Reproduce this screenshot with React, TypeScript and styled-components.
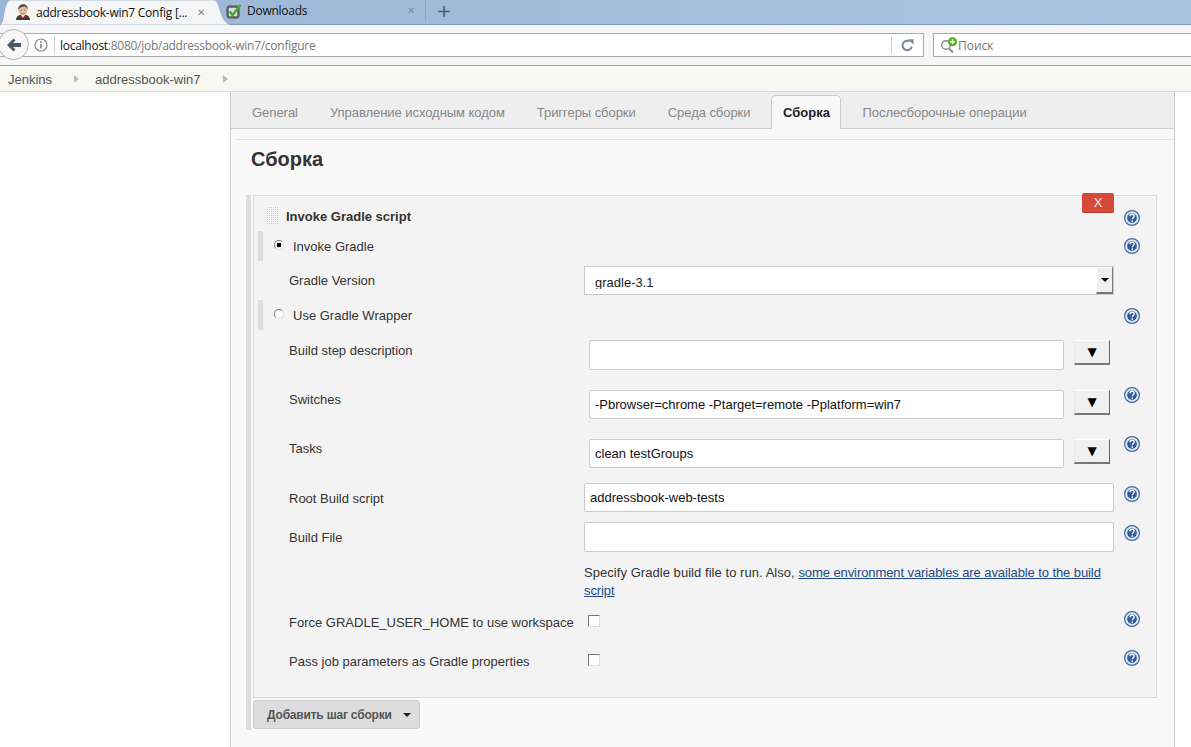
import styled, { createGlobalStyle } from "styled-components";

const GlobalStyle = createGlobalStyle`
    html, body {
        margin: 0;
        padding: 0;
        height: 100%;
        overflow: hidden;
        background: #fff;
    }
    body {
        font-family: "Liberation Sans", Arial, sans-serif;
        font-size: 13px;
        color: #333;
    }
`;

function HelpIcon() {
    return (
        <HelpSvg viewBox="0 0 16 16" aria-label="Help">
            <circle cx="8" cy="8" r="7.4" fill="#dfe7f2" stroke="#3f6aa5" strokeWidth="1.2" />
            <circle cx="8" cy="8" r="5.4" fill="#2f5c9c" stroke="#fff" strokeWidth="0.9" />
            <path
                d="M5.9 6.3c0-1.3 1-2.1 2.2-2.1s2.1.8 2.1 1.9c0 1.6-1.9 1.6-1.9 3.1"
                fill="none"
                stroke="#fff"
                strokeWidth="1.4"
            />
            <rect x="7.5" y="10.4" width="1.5" height="1.5" fill="#fff" />
        </HelpSvg>
    );
}

function JenkinsFavicon() {
    return (
        <Favicon viewBox="0 0 16 16">
            <path d="M1 16c0-3 2-4.500 4-5h6c2 .5 4 2 4 5z" fill="#3d3a3a" />
            <path d="M6 11h4l-2 3z" fill="#fff" />
            <path d="M5 11.500l3 1.300 3-1.300v2l-3-1-3 1z" fill="#c4332d" />
            <ellipse cx="8" cy="6" rx="4.600" ry="5.300" fill="#e8bfa3" />
            <path d="M3.400 6.500C2.800 2.500 5 .2 8 .2s5.200 2 4.600 5.500c-.6-2-1.600-3-3.200-3.200-2 .6-4.800.4-6 4z" fill="#5b4a44" />
            <path d="M5.500 9.200c1.500 1 3.500 1 5 0" stroke="#9a6a55" strokeWidth=".8" fill="none" />
            <circle cx="6.300" cy="6" r=".6" fill="#333" />
            <circle cx="9.800" cy="6" r=".6" fill="#333" />
        </Favicon>
    );
}

function DownloadsFavicon() {
    return (
        <Favicon viewBox="0 0 16 16">
            <rect x="1" y="3" width="12" height="12" rx="2" fill="#77797b" stroke="#444" strokeWidth="1" />
            <rect x="3" y="5" width="8" height="8" fill="#d9dbdc" />
            <path d="M3.500 8.500l3 3.500L14.500 2" fill="none" stroke="#3fae2a" strokeWidth="2.400" />
        </Favicon>
    );
}

function BackArrow() {
    return (
        <svg width="16" height="16" viewBox="0 0 16 16">
            <path d="M1 8l6.500-6.500 2 2L7 6h8v4H7l2.500 2.500-2 2z" fill="#4a5a6c" />
        </svg>
    );
}

function InfoIcon() {
    return (
        <svg width="14" height="14" viewBox="0 0 14 14">
            <circle cx="7" cy="7" r="6" fill="none" stroke="#8a8a8a" strokeWidth="1.200" />
            <rect x="6.200" y="6" width="1.600" height="4.500" fill="#7a7a7a" />
            <rect x="6.200" y="3.300" width="1.600" height="1.600" fill="#7a7a7a" />
        </svg>
    );
}

function ReloadIcon() {
    return (
        <svg width="13" height="13" viewBox="0 0 13 13">
            <path
                d="M10.800 7.500A4.700 4.700 0 1 1 8.500 2.400"
                fill="none"
                stroke="#76889a"
                strokeWidth="2"
            />
            <path d="M7 0.200h5.500v5.500z" fill="#76889a" />
        </svg>
    );
}

function SearchIcon() {
    return (
        <SearchSvg viewBox="0 0 18 17">
            <circle cx="6" cy="8" r="4.300" fill="none" stroke="#8b8b8b" strokeWidth="1.500" />
            <path d="M9 11.500l4 4" stroke="#8b8b8b" strokeWidth="2" />
            <circle cx="12.500" cy="4.700" r="4.500" fill="#4fb31f" />
            <path d="M10 4.700h5M12.500 2.200v5" stroke="#fff" strokeWidth="1.500" />
        </SearchSvg>
    );
}

function ActiveTabShape() {
    return (
        <ActiveShapeSvg viewBox="0 0 232 25" preserveAspectRatio="none">
            <path
                d="M0 25C5 22 3 0 11 0H214C221 0 219 24 232 25Z"
                fill="#f5f5f5"
                stroke="#7f9ab8"
                strokeWidth="0.600"
            />
        </ActiveShapeSvg>
    );
}

function DropButton() {
    return <DropBtn type="button">▼</DropBtn>;
}

export default function App() {
    return (
        <>
            <GlobalStyle />
            <Page>
                <TabStrip>
                    <ActiveTab>
                        <ActiveTabShape />
                        <JenkinsFavicon />
                        <TabTitle>addressbook-win7 Config [...</TabTitle>
                        <TabClose>✕</TabClose>
                    </ActiveTab>
                    <InactiveTab>
                        <DownloadsFavicon />
                        <TabTitle>Downloads</TabTitle>
                        <TabClose>✕</TabClose>
                    </InactiveTab>
                    <NewTab>+</NewTab>
                </TabStrip>
                <Toolbar>
                    <BackButton>
                        <BackArrow />
                    </BackButton>
                    <UrlBar>
                        <InfoIcon />
                        <UrlDivider />
                        <UrlText>
                            <b>localhost</b>:8080/job/addressbook-win7/configure
                        </UrlText>
                        <ReloadBox>
                            <ReloadIcon />
                        </ReloadBox>
                    </UrlBar>
                    <SearchBar>
                        <SearchIcon />
                        <SearchText>Поиск</SearchText>
                    </SearchBar>
                </Toolbar>
                <Breadcrumbs>
                    <Crumb>Jenkins</Crumb>
                    <CrumbArrow />
                    <Crumb>addressbook-win7</Crumb>
                    <CrumbArrow />
                </Breadcrumbs>
                <Body>
                    <Sidebar />
                    <Main>
                        <TabBar>
                            <ConfigTab>General</ConfigTab>
                            <ConfigTab>Управление исходным кодом</ConfigTab>
                            <ConfigTab>Триггеры сборки</ConfigTab>
                            <ConfigTab>Среда сборки</ConfigTab>
                            <ConfigTab $active>Сборка</ConfigTab>
                            <ConfigTab>Послесборочные операции</ConfigTab>
                        </TabBar>
                        <Section>
                            <SectionTitle>Сборка</SectionTitle>
                        </Section>
                        <Block>
                            <StepBox>
                                <DeleteButton type="button">X</DeleteButton>
                                <StepHeader>
                                    <Handle />
                                    <StepTitle>Invoke Gradle script</StepTitle>
                                    <HelpIcon />
                                </StepHeader>
                                <RadioRow>
                                    <RadioLabel>
                                        <Radio type="radio" name="mode" defaultChecked />
                                        Invoke Gradle
                                    </RadioLabel>
                                    <HelpIcon />
                                </RadioRow>
                                <Row $height={39} $pad={5}>
                                    <FieldLabel $pad={7}>Gradle Version</FieldLabel>
                                    <SelectBox>
                                        <SelectValue>gradle-3.1</SelectValue>
                                        <SelectArrow />
                                    </SelectBox>
                                </Row>
                                <RadioRow $helpShift={1}>
                                    <RadioLabel>
                                        <Radio type="radio" name="mode" />
                                        Use Gradle Wrapper
                                    </RadioLabel>
                                    <HelpIcon />
                                </RadioRow>
                                <Row $height={50} $pad={10}>
                                    <FieldLabel $pad={3}>Build step description</FieldLabel>
                                    <ExpandField>
                                        <TextInput defaultValue="" $height={30} />
                                        <DropButton />
                                    </ExpandField>
                                </Row>
                                <Row $height={49} $pad={10} $helpTop={-3}>
                                    <FieldLabel $pad={2}>Switches</FieldLabel>
                                    <ExpandField>
                                        <TextInput defaultValue="-Pbrowser=chrome -Ptarget=remote -Pplatform=win7" />
                                        <DropButton />
                                    </ExpandField>
                                    <HelpIcon />
                                </Row>
                                <Row $height={49} $pad={10} $helpTop={-3}>
                                    <FieldLabel $pad={2}>Tasks</FieldLabel>
                                    <ExpandField>
                                        <TextInput defaultValue="clean testGroups" />
                                        <DropButton />
                                    </ExpandField>
                                    <HelpIcon />
                                </Row>
                                <Row $height={39} $pad={5} $helpTop={3}>
                                    <FieldLabel $pad={8}>Root Build script</FieldLabel>
                                    <TextInput defaultValue="addressbook-web-tests" />
                                    <HelpIcon />
                                </Row>
                                <Row $height={39} $pad={5} $helpTop={3}>
                                    <FieldLabel $pad={8}>Build File</FieldLabel>
                                    <TextInput defaultValue="" $height={30} />
                                    <HelpIcon />
                                </Row>
                                <HintRow>
                                    Specify Gradle build file to run. Also,{" "}
                                    <HintLink href="#">
                                        some environment variables are available to the build script
                                    </HintLink>
                                </HintRow>
                                <CheckRow>
                                    <CheckLabel>Force GRADLE_USER_HOME to use workspace</CheckLabel>
                                    <CheckBox type="checkbox" />
                                    <HelpIcon />
                                </CheckRow>
                                <CheckRow>
                                    <CheckLabel>Pass job parameters as Gradle properties</CheckLabel>
                                    <CheckBox type="checkbox" />
                                    <HelpIcon />
                                </CheckRow>
                            </StepBox>
                            <AddStepButton type="button">
                                Добавить шаг сборки
                                <AddCaret />
                            </AddStepButton>
                        </Block>
                    </Main>
                    <RightGutter />
                </Body>
            </Page>
        </>
    );
}

const Page = styled.div`
    width: 1191px;
    height: 747px;
    overflow: hidden;
    display: flex;
    flex-direction: column;
`;

const TabStrip = styled.div`
    height: 24px;
    flex: none;
    display: flex;
    padding-left: 5px;
    background: linear-gradient(to right, #9ab6d6, #abc5e1);
    border-bottom: 1px solid #7d98b7;
    font-family: "Open Sans", sans-serif;
    font-size: 12px;
    letter-spacing: -0.25px;
    color: #111;
`;

const Favicon = styled.svg`
    width: 16px;
    height: 16px;
    flex: none;
    position: relative;
`;

const ActiveShapeSvg = styled.svg`
    position: absolute;
    left: -5px;
    top: 0;
    width: 232px;
    height: 25px;
`;

const ActiveTab = styled.div`
    position: relative;
    width: 215px;
    display: flex;
    align-items: center;
    padding: 0 5px 0 10px;
    box-sizing: border-box;
    flex: none;
`;

const InactiveTab = styled.div`
    width: 206px;
    box-sizing: border-box;
    display: flex;
    align-items: center;
    padding-left: 6px;
    flex: none;
    border-right: 1px solid #8aa3bf;
    margin: 0 0 3px;
    position: relative;
`;

const TabTitle = styled.span`
    position: relative;
    margin-left: 5px;
    flex: 1;
    white-space: nowrap;
`;

const TabClose = styled.span`
    position: relative;
    width: 18px;
    text-align: left;
    color: #7f8994;
    font-family: "DejaVu Sans", sans-serif;
    font-size: 10px;
    font-weight: bold;
`;

const NewTab = styled.div`
    width: 36px;
    text-align: center;
    font-family: "DejaVu Sans", sans-serif;
    font-size: 18px;
    line-height: 22px;
    color: #4e5a68;
`;

const Toolbar = styled.div`
    height: 41px;
    flex: none;
    box-sizing: border-box;
    display: flex;
    gap: 9px;
    padding-top: 8px;
    position: relative;
    background: #f5f5f5;
    border-bottom: 1px solid #a8a8a8;
`;

const BackButton = styled.div`
    position: absolute;
    left: -2px;
    top: 4px;
    width: 29px;
    height: 29px;
    border: 1px solid #b5b5b5;
    border-radius: 50%;
    background: #f7f7f7;
    display: flex;
    align-items: center;
    justify-content: center;
`;

const UrlBar = styled.div`
    width: 924px;
    height: 24px;
    box-sizing: border-box;
    background: #fff;
    border: 1px solid #ababab;
    border-left: none;
    display: flex;
    align-items: center;
    padding-left: 34px;
    flex: none;
`;

const UrlDivider = styled.span`
    width: 1px;
    height: 17px;
    margin: 0 5px 0 6px;
    background: #ccc;
`;

const UrlText = styled.span`
    flex: 1;
    font-family: "Open Sans", sans-serif;
    font-size: 12px;
    letter-spacing: -0.27px;
    color: #777;
    white-space: nowrap;
    b {
        font-weight: 400;
        color: #111;
    }
`;

const ReloadBox = styled.div`
    width: 31px;
    height: 17px;
    border-left: 1px solid #ccc;
    display: flex;
    align-items: center;
    justify-content: center;
`;

const SearchBar = styled.div`
    flex: 1;
    height: 24px;
    box-sizing: border-box;
    background: #fff;
    border: 1px solid #ababab;
    border-right: none;
    display: flex;
    align-items: center;
    padding-left: 6px;
`;

const SearchSvg = styled.svg`
    width: 18px;
    height: 17px;
    flex: none;
`;

const SearchText = styled.span`
    font-family: "Open Sans", sans-serif;
    font-size: 12px;
    color: #757575;
`;

const Breadcrumbs = styled.div`
    height: 26px;
    flex: none;
    box-sizing: border-box;
    display: flex;
    align-items: center;
    padding: 1px 0 0 8px;
    background: #f6f8f1;
    border-bottom: 1px solid #d8d8d4;
    color: #555;
`;

const Crumb = styled.span`
    white-space: nowrap;
`;

const CrumbArrow = styled.span`
    width: 0;
    height: 0;
    margin: 0 16px 0 22px;
    border-left: 5px solid #b8bab5;
    border-top: 4px solid transparent;
    border-bottom: 4px solid transparent;
`;

const Body = styled.div`
    flex: 1;
    min-height: 0;
    display: flex;
`;

const Sidebar = styled.div`
    width: 230px;
    flex: none;
    background: #fff;
`;

const RightGutter = styled.div`
    flex: 1;
    background: #fff;
`;

const Main = styled.div`
    width: 945px;
    flex: none;
    box-sizing: border-box;
    background: #f9f9f9;
    border-left: 1px solid #ccc;
    border-right: 1px solid #ccc;
`;

const TabBar = styled.div`
    height: 37px;
    box-sizing: border-box;
    display: flex;
    align-items: flex-end;
    padding-left: 5px;
    background: #eee;
    border-bottom: 1px solid #ccc;
`;

const ConfigTab = styled.div<{ $active?: boolean }>`
    height: ${(p) => (p.$active ? "34px" : "31px")};
    box-sizing: border-box;
    display: flex;
    align-items: center;
    justify-content: center;
    white-space: nowrap;
    width: ${(p) => (p.$active ? "70px" : "auto")};
    margin: ${(p) => (p.$active ? "0 5px -1px" : "0")};
    padding: ${(p) => (p.$active ? "0" : "0 16px")};
    letter-spacing: ${(p) => (p.$active ? "0" : "-0.05px")};
    color: ${(p) => (p.$active ? "#222" : "#888")};
    font-weight: ${(p) => (p.$active ? "bold" : "normal")};
    background: ${(p) => (p.$active ? "#f9f9f9" : "transparent")};
    border: ${(p) => (p.$active ? "1px solid #ccc" : "none")};
    border-bottom: none;
    border-radius: 5px 5px 0 0;
`;

const Section = styled.div`
    margin: 10px 0 0 5px;
    border-top: 1px solid #e4e4e4;
    padding-left: 15px;
    height: 56px;
    box-sizing: border-box;
`;

const SectionTitle = styled.h2`
    margin: 0;
    padding-top: 7px;
    font-size: 20px;
    line-height: 24px;
    font-weight: bold;
    color: #333;
`;

const Block = styled.div`
    width: 911px;
    height: 535px;
    box-sizing: border-box;
    margin-left: 15px;
    border-left: 5px solid #ddd;
    padding-left: 2px;
`;

const StepBox = styled.div`
    position: relative;
    height: 503px;
    box-sizing: border-box;
    background: #f3f3f3;
    border: 1px solid #d9d9d9;
    padding-right: 16px;
`;

const DeleteButton = styled.button`
    position: absolute;
    top: -3px;
    right: 42px;
    width: 32px;
    height: 20px;
    padding: 0;
    border: none;
    border-bottom: 1px solid #b8382a;
    border-radius: 2px;
    background: #d64a3a;
    color: #fbe9e7;
    font-family: "Liberation Sans", sans-serif;
    font-size: 13px;
`;

const HelpSvg = styled.svg`
    width: 16px;
    height: 16px;
    flex: none;
    margin-top: 2px;
`;

const StepHeader = styled.div`
    height: 35px;
    box-sizing: border-box;
    display: flex;
    align-items: center;
    padding: 7px 0 0 13px;
    gap: 8px;
`;

const Handle = styled.div`
    width: 11px;
    height: 18px;
    flex: none;
    margin-top: -2px;
    background: repeating-linear-gradient(to right, #c9c9c9 0 1px, #f3f3f3 1px 2px),
        #fff;
    mask: repeating-linear-gradient(to bottom, #000 0 1px, transparent 1px 2px);
`;

const StepTitle = styled.div`
    flex: 1;
    font-weight: bold;
    margin-top: -2px;
`;

const RadioRow = styled.div<{ $helpShift?: number }>`
    height: 30px;
    box-sizing: border-box;
    margin-left: 4px;
    border-left: 5px solid #ddd;
    padding-left: 11px;
    display: flex;
    align-items: center;
    justify-content: space-between;
    & > svg {
        margin-top: ${(p) => (p.$helpShift ?? 0) * 2}px;
    }
`;

const RadioLabel = styled.label`
    display: flex;
    align-items: center;
    gap: 9px;
    padding-top: 1px;
    color: #333;
`;

const Radio = styled.input`
    appearance: none;
    width: 10px;
    height: 10px;
    margin: -3px 0 0 0;
    border-radius: 50%;
    background: #fff;
    border: 1px solid #777;
    border-right-color: #ddd;
    border-bottom-color: #ddd;
    box-sizing: border-box;
    &:checked {
        background: radial-gradient(circle, #000 0 2.2px, #fff 2.6px);
    }
`;

const Row = styled.div<{ $height: number; $pad: number; $helpTop?: number }>`
    height: ${(p) => p.$height}px;
    box-sizing: border-box;
    padding: ${(p) => p.$pad}px 0 0 35px;
    display: grid;
    grid-template-columns: 295px 530px 16px;
    column-gap: 0;
    align-items: start;
    & > svg {
        margin-left: 10px;
        margin-top: ${(p) => p.$helpTop ?? 0}px;
    }
`;

const FieldLabel = styled.div<{ $pad: number }>`
    padding-top: ${(p) => p.$pad}px;
    color: #333;
    white-space: nowrap;
`;

const SelectBox = styled.div`
    height: 29px;
    box-sizing: border-box;
    display: flex;
    background: #fff;
    border: 1px solid #ccc;
`;

const SelectValue = styled.div`
    flex: 1;
    height: 22px;
    padding: 8px 0 0 10px;
    overflow: hidden;
    box-sizing: border-box;
    line-height: 15px;
    color: #222;
`;

const SelectArrow = styled.div`
    width: 17px;
    box-sizing: border-box;
    background: #f0f0f0;
    border: 1px solid #fff;
    border-right: 1px solid #777;
    border-bottom: 2px solid #777;
    display: flex;
    align-items: center;
    justify-content: center;
    &::before {
        content: "";
        border-top: 4px solid #000;
        border-left: 4px solid transparent;
        border-right: 4px solid transparent;
    }
`;

const ExpandField = styled.div`
    display: flex;
    align-items: flex-start;
    gap: 10px;
    padding: 0 4px 0 5px;
`;

const TextInput = styled.input<{ $height?: number }>`
    flex: 1;
    min-width: 0;
    width: 100%;
    height: ${(p) => p.$height ?? 29}px;
    box-sizing: border-box;
    padding: 0 5px;
    background: #fff;
    border: 1px solid #ccc;
    border-radius: 2px;
    font-family: "Liberation Sans", sans-serif;
    font-size: 13px;
    color: #111;
    outline: none;
`;

const DropBtn = styled.button`
    width: 36px;
    height: 25px;
    flex: none;
    padding: 0;
    background: #f0f0f0;
    border: 1px solid #d8d8d8;
    border-top-color: #fff;
    border-left-color: #e8e8e8;
    border-right: 1px solid #666;
    border-bottom: 2px solid #777;
    color: #000;
    font-family: "DejaVu Sans", sans-serif;
    font-size: 12px;
    line-height: 20px;
`;

const HintRow = styled.div`
    height: 44px;
    padding: 8px 0 0 330px;
    width: 530px;
    line-height: 18px;
    letter-spacing: 0.05px;
    color: #333;
`;

const HintLink = styled.a`
    color: #204a87;
    text-decoration: underline;
    letter-spacing: -0.09px;
`;

const CheckRow = styled.div`
    height: 39px;
    display: grid;
    grid-template-columns: 299px 1fr 16px;
    padding-left: 35px;
    align-items: start;
    & > svg {
        margin-top: 3px;
    }
`;

const CheckLabel = styled.div`
    color: #333;
    padding-top: 7px;
    white-space: nowrap;
`;

const CheckBox = styled.input`
    appearance: none;
    width: 12px;
    height: 12px;
    margin: 7px 0 0 0;
    box-sizing: border-box;
    background: #fff;
    border: 1px solid #777;
    border-right-color: #ddd;
    border-bottom-color: #ddd;
`;

const AddStepButton = styled.button`
    margin-top: 2px;
    width: 167px;
    height: 29px;
    box-sizing: border-box;
    display: flex;
    align-items: center;
    padding: 0 0 0 13px;
    background: #ddd;
    border: 1px solid #ccc;
    border-radius: 3px;
    font-family: "Liberation Sans", sans-serif;
    font-size: 12px;
    font-weight: bold;
    letter-spacing: -0.2px;
    color: #555;
`;

const AddCaret = styled.span`
    margin-left: 11px;
    border-top: 4px solid #222;
    border-left: 4px solid transparent;
    border-right: 4px solid transparent;
`;
